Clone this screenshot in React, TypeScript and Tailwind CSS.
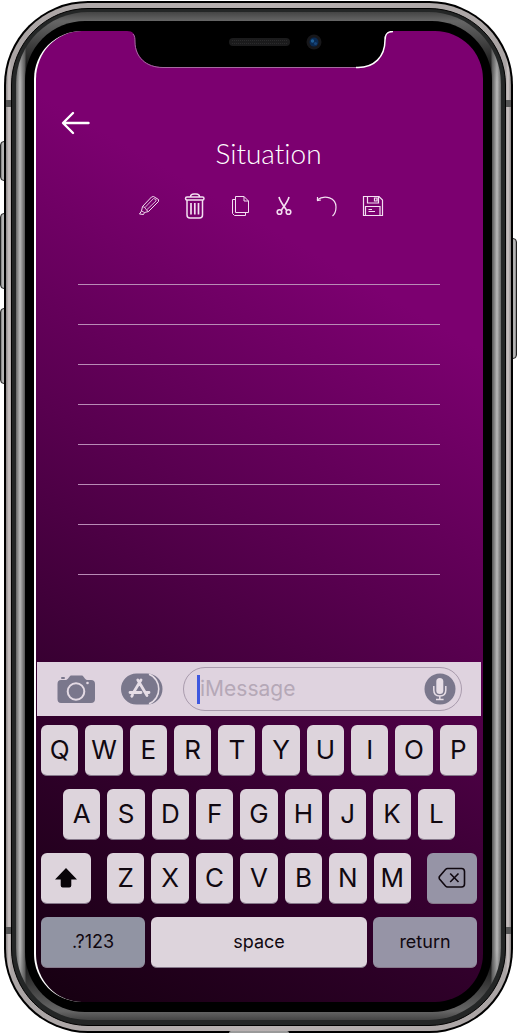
import React from "react";

const noteLines = [1, 2, 3, 4, 5, 6, 7];
const topRow = ["Q", "W", "E", "R", "T", "Y", "U", "I", "O", "P"];
const homeRow = ["A", "S", "D", "F", "G", "H", "J", "K", "L"];
const bottomRow = ["Z", "X", "C", "V", "B", "N", "M"];

const keyBase =
  "flex h-[51px] items-center justify-center rounded-md border-b border-[#85788a] text-[#100810]";
const lightKey = "bg-[#ddd4dc]";
const darkKey = "bg-[#9694a6]";

function LetterKey({ letter }: { letter: string }) {
  return (
    <button type="button" className={`${keyBase} ${lightKey} min-w-0 flex-1 text-[26px] leading-8`}>
      {letter}
    </button>
  );
}

function Notch() {
  return (
    <div className="absolute inset-x-0 top-0 flex justify-center">
      <svg width="266" height="38" viewBox="0 0 266 38" fill="none" aria-hidden="true">
        <path
          d="M0 0C6 0 8 3 8 8C8 26 19 36 36 36H231C247 36 258 26 258 9C258 3 260 0 266 0Z"
          fill="#000"
        />
        <path d="M6 3C8 5 8 8 8 11C8 26 19 36.500 36 36.500H231" stroke="#a56aa0" strokeWidth="1" />
        <path
          d="M229 36.500H231C247 36.500 258 26 258 9C258 3 260 .5 266 .5"
          stroke="#fff"
          strokeWidth="1.500"
        />
        <rect x="102" y="7" width="61" height="8" rx="4" fill="#1b1b1c" />
        <path d="M105 9.500H160M105 12.500H160" stroke="#2b2b2c" strokeDasharray="1 1" />
        <circle cx="187" cy="11" r="7.500" fill="#17171a" />
        <circle cx="187" cy="11" r="4.500" fill="#0a2a52" />
        <circle cx="185.500" cy="10" r="1.700" fill="#1f5f96" />
        <circle cx="188.500" cy="12.500" r="1.500" fill="#17457a" />
      </svg>
    </div>
  );
}

function Toolbar() {
  return (
    <div className="mt-3 flex h-[50px] items-center pl-[102px] text-[#f3dff1]">
      <button type="button" aria-label="Highlight" className="mr-6 w-[22px]">
        <svg width="22" height="22" viewBox="0 0 22 22" fill="none" stroke="currentColor" strokeWidth="1">
          <path d="M4.500 11.500L13.500 2L15.500 1.500L20.500 4.500V6.500L10.500 16.500L6.500 17.500L5.500 19.500L1.500 19L3.500 16Z" />
          <path d="M4.500 11.500L7 12.500L8 14.500L10.500 16.500M7 12.500L15.500 3.500L18 4.500V6L8.500 15M3.500 16L6.500 17.500" strokeWidth=".8" />
        </svg>
      </button>
      <button type="button" aria-label="Delete note" className="mr-6 w-[22px]">
        <svg width="22" height="26" viewBox="0 0 22 26" fill="none" stroke="currentColor" strokeWidth="1.500">
          <rect x="1.500" y="4" width="18.500" height="3" rx="1.500" />
          <path d="M6.500 4C6.500 2 8 1 10 1H12C14 1 15.500 2 15.500 4M3 7V22Q3 25 6 25H15.500Q18.500 25 18.500 22V7" />
          <path d="M7 10V21.500M10.800 10V21.500M14.500 10V21.500" strokeWidth="1.700" />
        </svg>
      </button>
      <button type="button" aria-label="Copy" className="mr-6 w-[22px]">
        <svg width="22" height="22" viewBox="0 0 22 22" fill="none" stroke="currentColor" strokeWidth="1">
          <path d="M5.500 1.500H14L18.500 6V17.500H5.500ZM14 1.500V6H18.500" />
          <path d="M5.500 4.500H2.500V18.500L4.500 20.500H15.500V17.500" />
        </svg>
      </button>
      <button type="button" aria-label="Cut" className="mr-5 w-[20px]">
        <svg width="20" height="20" viewBox="0 0 20 20" fill="none" stroke="currentColor" strokeWidth="1.600">
          <path d="M3 1C3.500 4 6.500 8.500 10.500 14M13 1C12.500 4 9.500 8.500 5.500 14" />
          <circle cx="3.500" cy="16" r="2.300" />
          <circle cx="12.500" cy="16" r="2.300" />
        </svg>
      </button>
      <button type="button" aria-label="Undo" className="mr-6 w-[22px]">
        <svg width="22" height="22" viewBox="0 0 22 22" fill="none" stroke="currentColor" strokeWidth="1.200">
          <path d="M1 5C9 -1 20 3 20 12Q20 18 16.500 21" />
          <path d="M1.500 2V5.500L5 5" />
        </svg>
      </button>
      <button type="button" aria-label="Save" className="w-[22px]">
        <svg width="22" height="22" viewBox="0 0 22 22" fill="none" stroke="currentColor" strokeWidth="1.200">
          <path d="M1.500 1.500H17L20.500 5V20.500H1.500Z" />
          <path d="M5.500 1.500V8H16.500V1.500M12.500 3V6H15V3ZM3.500 20.500V11.500H18V20.500M6.500 14.500H10M6.500 16.500H13" />
        </svg>
      </button>
    </div>
  );
}

function MessageBar() {
  return (
    <div className="mr-[2px] ml-[1px] flex h-[54px] items-center bg-[#dfd3df] pr-[19px] pl-5 text-[#7a778c]">
      <button type="button" aria-label="Camera" className="mr-6 shrink-0">
        <svg width="40" height="32" viewBox="0 0 40 32" aria-hidden="true">
          <path
            d="M4 7H9C11 7 12 3 14 2.500H25C27 3 28 7 30 7H34Q38 7 38 11V26Q38 30 34 30H4Q.5 30 .5 26V11Q.5 7 4 7Z"
            fill="currentColor"
          />
          <rect x="4" y="4" width="4" height="2" rx="1" fill="currentColor" />
          <circle cx="19" cy="18.500" r="8.300" fill="none" stroke="#e4dae4" strokeWidth="2" />
          <circle cx="30.500" cy="10" r="1.300" fill="#e4dae4" />
        </svg>
      </button>
      <button type="button" aria-label="App Store" className="mr-5 shrink-0">
        <svg width="42" height="32" viewBox="0 0 42 32" aria-hidden="true">
          <path d="M15.500 .5H26A15.500 15.500 0 0 1 26 31.500H15.500A15.500 15.500 0 0 1 15.500 .5Z" fill="currentColor" />
          <path
            d="M28 1.300C41 6 41 26 28 30.700"
            stroke="#e6dde6"
            strokeWidth="1.600"
            fill="none"
          />
          <g stroke="#e6dde6" strokeWidth="2.800" strokeLinecap="round" fill="none">
            <path d="M20 7L12.500 19.500M16.800 7L26 22.500M9 19.500H20M25.500 19.500H28M11.500 22L10.800 23.200" />
          </g>
        </svg>
      </button>
      <div className="flex h-[44px] min-w-0 flex-1 items-center rounded-full border border-[#a99bad] pr-[5px] pl-[13px]">
        <span className="h-[29px] w-[3px] shrink-0 bg-[#3f58df]" />
        <input
          aria-label="Message"
          placeholder="iMessage"
          className="min-w-0 flex-1 bg-transparent text-[21px] leading-7 text-[#100810] outline-none placeholder:text-[#b5a8b7]"
        />
        <button type="button" aria-label="Dictate" className="shrink-0">
          <svg width="32" height="32" viewBox="0 0 32 32" aria-hidden="true">
            <circle cx="16" cy="16" r="15.500" fill="currentColor" />
            <rect x="12.300" y="5" width="7" height="16" rx="3.500" fill="#e6dde6" />
            <path d="M9.800 13V17Q9.800 23 15.800 23Q21.800 23 21.800 17V13M15.800 23V26.500M12 26.500H19.600" stroke="#e6dde6" strokeWidth="1.500" fill="none" />
          </svg>
        </button>
      </div>
    </div>
  );
}

function Keyboard() {
  return (
    <div className="flex flex-col gap-[13px] pt-[9px] pr-[6px] pb-[34px] pl-[5px]">
      <div className="flex gap-[7px]">
        {topRow.map((k) => (
          <LetterKey key={k} letter={k} />
        ))}
      </div>
      <div className="flex gap-[7px] px-[22px]">
        {homeRow.map((k) => (
          <LetterKey key={k} letter={k} />
        ))}
      </div>
      <div className="flex gap-4">
        <button type="button" aria-label="Shift" className={`${keyBase} ${lightKey} w-[50px]`}>
          <svg width="24" height="22" viewBox="0 0 24 22" aria-hidden="true">
            <path d="M12 1L23 12.500H17.300V18.500Q17.300 20.500 15.300 20.500H8.700Q6.700 20.500 6.700 18.500V12.500H1Z" fill="#080408" />
          </svg>
        </button>
        <div className="flex min-w-0 flex-1 gap-[7px]">
          {bottomRow.map((k) => (
            <LetterKey key={k} letter={k} />
          ))}
        </div>
        <button type="button" aria-label="Backspace" className={`${keyBase} ${darkKey} w-[50px]`}>
          <svg width="28" height="22" viewBox="0 0 28 22" fill="none" stroke="#100810" strokeWidth="1.600" aria-hidden="true">
            <path d="M9.500 1.500H23.500Q26.500 1.500 26.500 4.500V17Q26.500 20 23.500 20H9.500Q8.500 20 7.500 19L1.500 12Q.8 10.800 1.500 9.500L7.500 2.500Q8.500 1.500 9.500 1.500Z" />
            <path d="M12.200 6.500L20.500 15M20.500 6.500L12.200 15" />
          </svg>
        </button>
      </div>
      <div className="flex gap-[6px] text-[18px] leading-6">
        <button type="button" className={`${keyBase} w-[104px] bg-[#9194a3]`}>
          .?123
        </button>
        <button type="button" className={`${keyBase} ${lightKey} flex-1`}>
          space
        </button>
        <button type="button" className={`${keyBase} ${darkKey} w-[104px]`}>
          return
        </button>
      </div>
    </div>
  );
}

function Screen() {
  return (
    <main className="relative overflow-hidden rounded-[48px] border-l-2 border-white bg-[linear-gradient(210deg,#7c0070_0%,#7c0070_26%,#58004f_51%,#35002f_74%,#150010_100%)] bg-origin-border">
      <Notch />
      <header className="pt-[76px]">
        <button type="button" aria-label="Back" className="ml-[25px] block">
          <svg width="30" height="30" viewBox="0 0 30 30" fill="none" stroke="#fff" strokeWidth="2.400" strokeLinecap="round" strokeLinejoin="round">
            <path d="M27.500 16H2.500M12 6L2 16L12 26" />
          </svg>
        </button>
        <h1 className="pl-[18px] text-center font-[Lato,sans-serif] text-[28px] leading-8 font-light text-white [font-variant-ligatures:none]">
          Situation
        </h1>
      </header>
      <Toolbar />
      <div className="mt-[14px] flex flex-col pr-[43px] pb-[87px] pl-[42px]">
        {noteLines.map((n) => (
          <input
            key={n}
            aria-label={`Note line ${n}`}
            className="h-[40px] w-full border-b border-[#b98bb6] bg-transparent text-white outline-none"
          />
        ))}
        <input
          aria-label="Note line 8"
          className="h-[50px] w-full border-b border-[#b98bb6] bg-transparent text-white outline-none"
        />
      </div>
      <MessageBar />
      <Keyboard />
    </main>
  );
}

const sideButton =
  "absolute border border-[#222] bg-[linear-gradient(90deg,#777,#c4c4c4,#888)]";
const band = "absolute h-[7px] w-[5px] bg-[#555]";

export default function App() {
  return (
    <div className="bg-white pt-[1px] pr-1 pb-[1px] pl-1 font-[Inter,sans-serif]">
      <div className="relative">
        <div className={`${sideButton} top-[140px] -left-1 h-[40px] w-[6px] rounded-l-sm`} />
        <div className={`${sideButton} top-[212px] -left-1 h-[76px] w-[6px] rounded-l-sm`} />
        <div className={`${sideButton} top-[307px] -left-1 h-[76px] w-[6px] rounded-l-sm`} />
        <div className={`${sideButton} top-[237px] -right-1 h-[121px] w-[6px] rounded-r-sm`} />
        <div className="relative rounded-[84px] bg-black p-[2px]">
          <div className="relative rounded-[82px] bg-[linear-gradient(90deg,#8b8787,#cbc3c3_3px,#aaa4a4_5px,#b9b2b2_50%,#aaa4a4_calc(100%-5px),#cbc3c3_calc(100%-3px),#8b8787)] p-[5px]">
            <div className={`${band} top-[97px] left-0`} />
            <div className={`${band} top-[97px] right-0`} />
            <div className={`${band} bottom-[97px] left-0`} />
            <div className={`${band} right-0 bottom-[97px]`} />
            <div className="rounded-[77px] border border-black bg-[#242626] px-1 pt-[3px] pb-[5px]">
              <div className="rounded-[72px] bg-[linear-gradient(180deg,#444_0px,#666_9px,transparent_70px,transparent_calc(100%-70px),#666_calc(100%-9px),#444_100%),linear-gradient(90deg,#666_0px,#b9b9b9_4px,#555_9px,#000_10px,#000_calc(100%-10px),#555_calc(100%-9px),#b9b9b9_calc(100%-4px),#666_100%)] px-[9px] pt-[9px] pb-2">
                <div className="rounded-[60px] bg-black px-[9px] py-[10px]">
                  <Screen />
                </div>
              </div>
            </div>
          </div>
        </div>
        <div className="absolute inset-x-0 bottom-0 mx-auto h-[2px] w-[60px] rounded-t-sm bg-[#999]" />
      </div>
    </div>
  );
}
